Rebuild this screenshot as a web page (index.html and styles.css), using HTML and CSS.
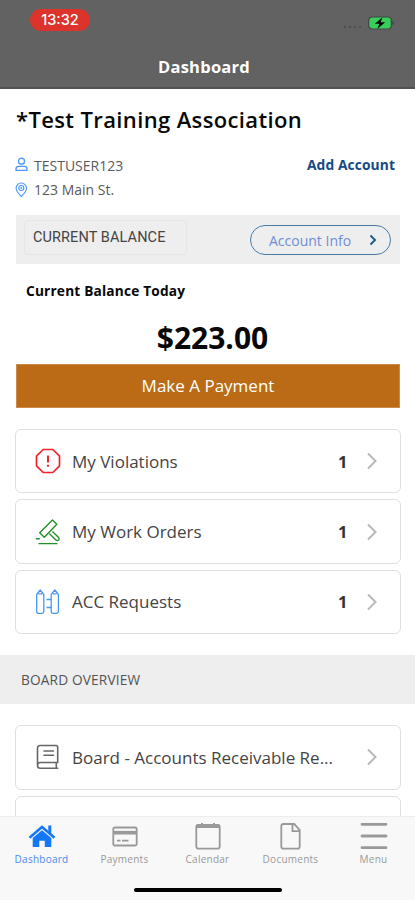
FILE: index.html
```html
<!DOCTYPE html>
<html lang="en">
<head>
<meta charset="utf-8">
<title>Dashboard</title>
<link rel="stylesheet" href="styles.css">
</head>
<body>
<div class="app">
  <header class="header">
    <div class="status">
      <span class="clock">13:32</span>
      <span class="signal"><i></i><i></i><i></i><i></i></span>
      <svg class="battery" width="26" height="14" viewBox="0 0 26 14"><rect x=".7" y="1" width="22.6" height="12" rx="3.4" fill="#35cf5a" stroke="#444" stroke-width="1.2"/><path d="M24.4 5v4q1.4-.5 1.4-2t-1.4-2Z" fill="#3d3d3d"/><path d="M14.5 1.2 6.8 7.8h4.6L9.5 12.8l7.7-6.6h-4.6Z" fill="#050505"/></svg>
    </div>
    <h1 class="screen-title">Dashboard</h1>
  </header>
  <main class="content">
    <h2 class="association">*Test Training Association</h2>
    <section class="account">
      <div class="identity">
        <div class="line"><svg width="14" height="16" viewBox="0 0 14 16" fill="none" stroke="#4b97ff" stroke-width="1.3"><circle cx="6.5" cy="4.2" r="3"/><path d="M1 13.4v-1.5q0-2.5 2.6-2.5h5.8q2.6 0 2.6 2.5v1.5Z"/></svg><span>TESTUSER123</span></div>
        <div class="line"><svg width="14" height="16" viewBox="0 0 14 16" fill="none" stroke="#4b97ff" stroke-width="1.1"><path d="M6.300 14.500Q1.100 9.300 1.100 6.200a5.200 5.200 0 0 1 10.400 0Q11.500 9.300 6.300 14.500Z"/><circle cx="6.300" cy="6" r="2.500"/><circle cx="6.300" cy="6" r=".4"/></svg><span>123 Main St.</span></div>
      </div>
      <a class="add">Add Account</a>
    </section>
    <section class="balance-bar">
      <div class="balance-label">CURRENT BALANCE</div>
      <a class="info"><span>Account Info</span><svg width="8" height="12" viewBox="0 0 8 12" fill="none" stroke="#1d5f86" stroke-width="2"><path d="m1.500 1.500 4.500 4.500-4.500 4.500"/></svg></a>
    </section>
    <p class="today">Current Balance Today</p>
    <p class="amount">$223.00</p>
    <a class="pay">Make A Payment</a>
    <div class="cards">
      <div class="card">
        <svg class="icon" width="26" height="26" viewBox="0 0 26 26" fill="none" stroke="#f5222d" stroke-width="1.700"><path d="M8.200 1.500h9.600l6.700 6.700v9.600l-6.700 6.700H8.200l-6.700-6.700V8.200Z"/><path d="M13 7.500v7M13 16.700v2" stroke-width="2"/></svg>
        <span class="name">My Violations</span><b>1</b>
        <svg class="chevron" width="12" height="18" viewBox="0 0 12 18"><path d="m2 1.500 7.500 7.500L2 16.500"/></svg>
      </div>
      <div class="card">
        <svg class="icon" width="26" height="26" viewBox="0 0 26 26" fill="none" stroke="#239027" stroke-width="1.400"><path d="m17.500 1 4.300 4.200L9.300 18.200 4.700 13.800Z" stroke-linejoin="round"/><path d="m14.300 14.500 6.800 6.700q1.800.8 2.700-.4.900-1.400-.4-2.600l-6-5.700M3.500 24.600h19M.8 19.700h4"/></svg>
        <span class="name">My Work Orders</span><b>1</b>
        <svg class="chevron" width="12" height="18" viewBox="0 0 12 18"><path d="m2 1.500 7.500 7.500L2 16.500"/></svg>
      </div>
      <div class="card">
        <svg class="icon" width="26" height="26" viewBox="0 0 26 26" fill="none" stroke="#4b97ef" stroke-width="1.300" stroke-linejoin="round"><path d="M1.700 5.500 5.200 1l3.600 4.500v17q0 1.800-1.800 1.800H3.500q-1.800 0-1.800-1.800ZM16.200 5.500 19.800 1l3.600 4.500v17q0 1.800-1.800 1.800H18q-1.800 0-1.800-1.800ZM3.500 4.800h3.500M18 4.800h3.500M11.500 10.500h4.700M11.500 18.500h4.700"/></svg>
        <span class="name">ACC Requests</span><b>1</b>
        <svg class="chevron" width="12" height="18" viewBox="0 0 12 18"><path d="m2 1.500 7.500 7.500L2 16.500"/></svg>
      </div>
    </div>
    <h3 class="board">BOARD OVERVIEW</h3>
    <div class="cards">
      <div class="card">
        <svg class="icon" width="26" height="26" viewBox="0 0 26 26" fill="none" stroke="#666" stroke-width="1.600"><path d="M22.700 18.500V3.200q0-1.700-1.700-1.700H5.200q-2.700 0-2.700 2.700v17.300q0 2.800 2.800 2.800h17.400M2.500 21.200q0-2.700 2.800-2.700h17.400M21.300 18.500v5.500M9 7h9.500M9 11.200h9.500" stroke-linecap="round"/></svg>
        <span class="name">Board - Accounts Receivable Re...</span>
        <svg class="chevron" width="12" height="18" viewBox="0 0 12 18"><path d="m2 1.500 7.500 7.500L2 16.500"/></svg>
      </div>
      <div class="card"></div>
    </div>
  </main>
  <nav class="tabs">
    <a class="tab active"><svg width="28" height="28" viewBox="0 0 28 28" fill="#1477f8"><path d="M14 8.200 23.300 16v9h-6.500v-6.300h-5.500V25H4.700v-9Z"/><path d="M1.500 15.700 14 5l12.500 10.700" fill="none" stroke="#1477f8" stroke-width="2.500"/><path d="M20.300 3.500h3v8h-3Z"/></svg><span>Dashboard</span></a>
    <a class="tab"><svg width="28" height="28" viewBox="0 0 28 28" fill="none" stroke="#999" stroke-width="1.800"><rect x="2.300" y="5.500" width="23.400" height="18" rx="1.500"/><path d="M2 10.700h24" stroke-width="3.600"/><path d="M6 18.700h3.500M11 18.700h6.500"/></svg><span>Payments</span></a>
    <a class="tab"><svg width="28" height="28" viewBox="0 0 28 28" fill="none" stroke="#999" stroke-width="1.800"><rect x="2.300" y="2.800" width="23.400" height="23.800" rx="2"/><path d="M2.500 4.200h23" stroke-width="3.600"/><path d="M8 1v3M20 1v3" stroke-width="2"/></svg><span>Calendar</span></a>
    <a class="tab"><svg width="28" height="28" viewBox="0 0 28 28" fill="none" stroke="#999" stroke-width="1.800"><path d="M17.200 2H6.500Q4.300 2 4.300 4.200v20.200q0 2.200 2.200 2.200h14q2.200 0 2.200-2.200V8.200ZM15.500 2v7.200h7.200"/></svg><span>Documents</span></a>
    <a class="tab"><svg width="28" height="28" viewBox="0 0 28 28" fill="none" stroke="#999" stroke-width="2.800" stroke-linecap="round"><path d="M2 2.300h24M2 14h24M2 25.700h24"/></svg><span>Menu</span></a>
    <div class="home-indicator"></div>
  </nav>
</div>
</body>
</html>
```
FILE: styles.css
```css
* { box-sizing: border-box; }
body { margin: 0; background: #fff; color: #080808; font-family: "Open Sans", "Noto Sans", sans-serif; }
h1, h2, h3, p { margin: 0; }
svg { display: block; flex: none; }
span { white-space: nowrap; }
.app { width: 415px; height: 900px; display: flex; flex-direction: column; overflow: hidden; }

.header { height: 89px; flex: none; background: #626262; border-bottom: 2px solid #525252; }
.status { height: 46px; display: flex; padding: 9px 21px 0 30px; }
.clock { width: 60px; height: 22px; border-radius: 11px; background: #dc332c; color: #fff; font: 500 14.5px/22px Inter, sans-serif; text-align: center; }
.signal { display: flex; gap: 3px; margin: 17px 7px 0 auto; }
.signal i { width: 2px; height: 2px; border-radius: 1px; background: #484848; }
.battery { margin-top: 7px; }
.screen-title { color: #fff; font-size: 16.5px; line-height: 42px; text-align: center; padding-right: 7px; letter-spacing: .25px; }

.content { flex: 1; min-height: 0; overflow: hidden; }
.association { height: 48px; padding: 13px 16px 0; font-size: 22px; line-height: 34px; font-weight: 600; letter-spacing: .37px; white-space: nowrap; }
.account { height: 78px; display: flex; justify-content: space-between; padding: 16px 20px 0 15px; }
.line { display: flex; align-items: center; gap: 5px; height: 24.5px; font-size: 14px; color: #5a5a5a; }
.add { color: #164985; font-size: 13.8px; font-weight: 700; line-height: 24px; letter-spacing: .1px; }
.balance-bar { height: 49px; margin: 0 15px 0 16px; background: #eee; display: flex; justify-content: space-between; align-items: flex-start; padding: 5px 9px 0 8px; }
.balance-label { width: 163px; height: 35px; border: 1px solid #e5e5e5; border-radius: 4px; padding-left: 8px; font: 400 14.5px/34px Roboto, sans-serif; letter-spacing: .1px; color: #444; }
.info { width: 141px; height: 30px; margin-top: 5px; border: 1px solid #487ba6; border-radius: 15px; display: flex; align-items: center; justify-content: space-between; padding: 0 13px 0 18px; color: #6e8fd5; font-size: 14px; }
.today { padding: 16px 26px 0; font-size: 13.7px; line-height: 21px; font-weight: 700; letter-spacing: .18px; }
.amount { padding-left: 10px; height: 63px; font-size: 30px; line-height: 73px; font-weight: 700; text-align: center; }
.pay { display: block; height: 44px; margin: 0 15px 0 16px; background: #bb6b16; border: 1px solid #c98a4b; color: #fff; font-size: 17px; line-height: 42px; text-align: center; }
.cards { display: flex; flex-direction: column; gap: 6px; padding: 21px 14.5px 0 15px; }
.card { height: 64.4px; flex: none; border: 1.500px solid #dfdfdf; border-radius: 6px; display: flex; align-items: center; padding: 0 22px 0 19px; }
.icon { margin-right: 11px; }
.name { font-size: 17px; color: #444; }
.card b { margin-left: auto; font-size: 16.5px; color: #333; }
.chevron { margin-left: 18px; fill: none; stroke: #b8b8b8; stroke-width: 2; }
.name + .chevron { margin-left: auto; }
.board { height: 49px; margin-top: 21px; padding-left: 21px; background: #eee; color: #555; font-size: 13.7px; line-height: 50px; font-weight: 400; letter-spacing: .15px; }

.tabs { height: 84px; flex: none; background: #f8f8f8; border-top: 1px solid #ececec; display: flex; position: relative; }
.tab { width: 83px; display: flex; flex-direction: column; align-items: center; padding-top: 5px; color: #999; font-size: 10px; line-height: 18px; letter-spacing: .25px; }
.active { color: #4b88ef; }
.home-indicator { position: absolute; left: 134px; bottom: 8px; width: 148px; height: 4px; border-radius: 2px; background: #000; }
```
